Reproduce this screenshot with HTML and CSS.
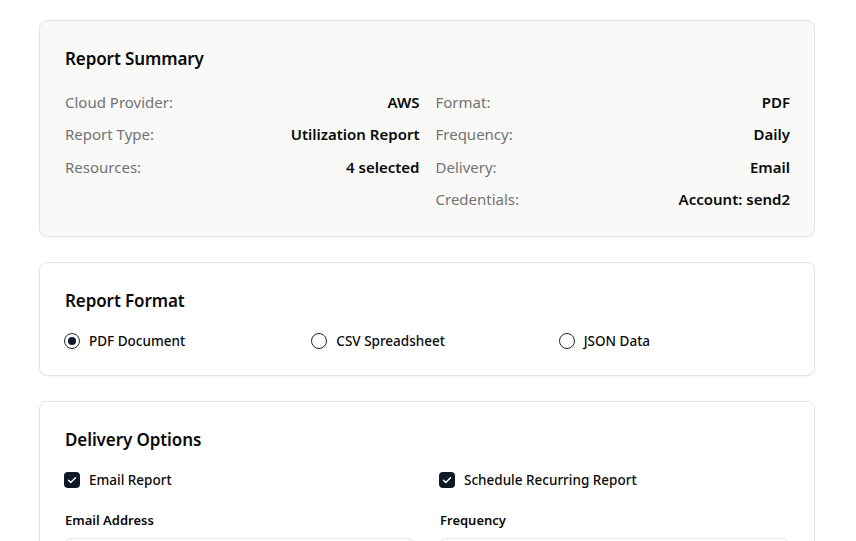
FILE: index.html
```html
<!DOCTYPE html>
<html lang="en">
<head>
<meta charset="utf-8">
<title>Report</title>
<link rel="stylesheet" href="styles.css">
</head>
<body>
<main class="page">
  <section class="card card-muted">
    <h2 class="card-title">Report Summary</h2>
    <div class="summary">
      <div class="summary-col">
        <div class="row"><span class="label">Cloud Provider:</span><span class="value">AWS</span></div>
        <div class="row"><span class="label">Report Type:</span><span class="value">Utilization Report</span></div>
        <div class="row"><span class="label">Resources:</span><span class="value">4 selected</span></div>
      </div>
      <div class="summary-col">
        <div class="row"><span class="label">Format:</span><span class="value">PDF</span></div>
        <div class="row"><span class="label">Frequency:</span><span class="value">Daily</span></div>
        <div class="row"><span class="label">Delivery:</span><span class="value">Email</span></div>
        <div class="row"><span class="label">Credentials:</span><span class="value">Account: send2</span></div>
      </div>
    </div>
  </section>

  <section class="card">
    <h2 class="card-title">Report Format</h2>
    <div class="radios">
      <label class="option"><span class="radio checked"></span><span>PDF Document</span></label>
      <label class="option"><span class="radio"></span><span>CSV Spreadsheet</span></label>
      <label class="option"><span class="radio"></span><span>JSON Data</span></label>
    </div>
  </section>

  <section class="card">
    <h2 class="card-title">Delivery Options</h2>
    <div class="delivery">
      <div class="delivery-col">
        <label class="option check-row"><span class="checkbox"><svg viewBox="0 0 16 16" width="16" height="16"><path d="M4.5 8.2l2.3 2.3 4.7-4.8" fill="none" stroke="#fff" stroke-width="1.4" stroke-linecap="round" stroke-linejoin="round"/></svg></span><span>Email Report</span></label>
        <div class="field-label">Email Address</div>
        <div class="input"></div>
      </div>
      <div class="delivery-col">
        <label class="option check-row"><span class="checkbox"><svg viewBox="0 0 16 16" width="16" height="16"><path d="M4.5 8.2l2.3 2.3 4.7-4.8" fill="none" stroke="#fff" stroke-width="1.4" stroke-linecap="round" stroke-linejoin="round"/></svg></span><span>Schedule Recurring Report</span></label>
        <div class="field-label">Frequency</div>
        <div class="input"></div>
      </div>
    </div>
  </section>
</main>
</body>
</html>
```

FILE: styles.css
```css
* { box-sizing: border-box; }
html, body { margin: 0; padding: 0; background: #ffffff; }
body {
  font-family: "Noto Sans", "Open Sans", "Liberation Sans", sans-serif;
  color: #0a0a0a;
}
.page {
  padding: 20px 41px 0 39px;
  display: flex;
  flex-direction: column;
  gap: 25px;
}
.card {
  background: #ffffff;
  border: 1px solid #e5e5e5;
  border-radius: 8px;
  padding: 24px 24px 24px 25px;
  box-shadow: 0 1px 2px rgba(0,0,0,0.04);
}
.card-muted { background: #f9f9f8; }
.card-title {
  margin: 0 0 16px;
  font-size: 17px;
  line-height: 28px;
  font-weight: 600;
  letter-spacing: -0.1px;
}
.card-muted .card-title { margin-bottom: 17px; }
.summary {
  display: grid;
  grid-template-columns: 1fr 1fr;
  gap: 16px;
  padding-bottom: 1px;
}
.summary-col { display: flex; flex-direction: column; gap: 8.4px; }
.row {
  display: flex;
  justify-content: space-between;
  font-size: 15px;
  line-height: 24px;
}
.label { color: #737373; }
.value { font-weight: 600; }
.radios {
  display: grid;
  grid-template-columns: repeat(3, 1fr);
  gap: 16px;
  margin-left: -1px;
}
.option {
  display: flex;
  align-items: center;
  gap: 9px;
  font-size: 13.5px;
  line-height: 20px;
  font-weight: 500;
}
.radio {
  width: 16px; height: 16px;
  border: 1px solid #1f2937;
  border-radius: 50%;
  display: flex; align-items: center; justify-content: center;
  flex: none;
}
.radio.checked::after {
  content: "";
  width: 8px; height: 8px;
  border-radius: 50%;
  background: #111827;
}
.delivery {
  display: grid;
  grid-template-columns: 1fr 1fr;
  gap: 24px;
  margin-left: -1px;
}
.delivery-col { display: flex; flex-direction: column; }
.check-row { margin-bottom: 20px; }
.checkbox {
  width: 16px; height: 16px;
  border-radius: 4px;
  background: #111827;
  display: flex; flex: none;
}
.field-label {
  font-size: 13px;
  line-height: 20px;
  font-weight: 600;
  margin-bottom: 8px;
  padding-left: 1px;
}
.input {
  height: 40px;
  border: 1px solid #e5e5e5;
  border-radius: 6px;
  margin: 0 1px 0 1px;
}
```
